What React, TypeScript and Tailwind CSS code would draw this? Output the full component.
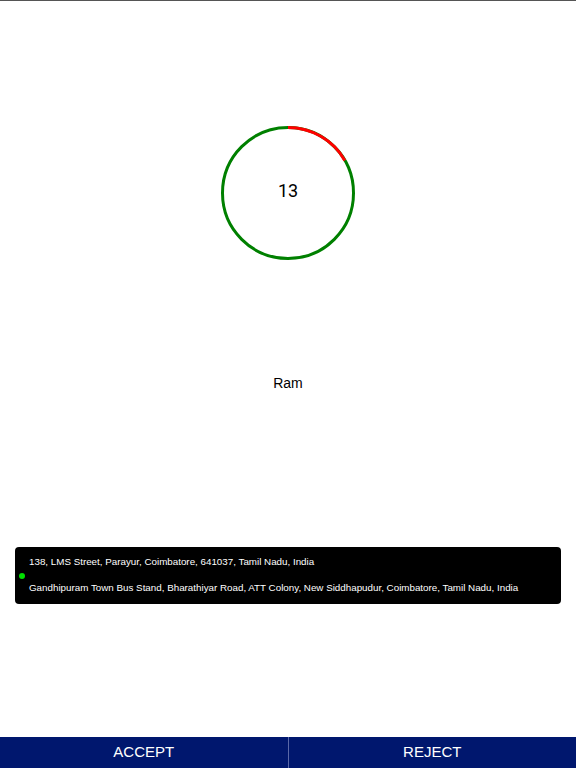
const RADIUS = 65.5;
const CIRC = 2 * Math.PI * RADIUS;

function Countdown({ value, elapsed }: { value: number; elapsed: number }) {
  const red = CIRC * elapsed;
  return (
    <div className="relative w-[136px] h-[136px]">
      <svg width="136" height="136" viewBox="0 0 136 136" className="-rotate-90">
        <circle cx="68" cy="68" r={RADIUS} fill="none" stroke="#008000" strokeWidth="3" />
        <circle
          cx="68"
          cy="68"
          r={RADIUS}
          fill="none"
          stroke="#ff0000"
          strokeWidth="3"
          strokeDasharray={`${red} ${CIRC}`}
        />
      </svg>
      <div className="absolute inset-0 pb-[5px] flex items-center justify-center text-[18px] text-black font-['Roboto',sans-serif]">
        {value}
      </div>
    </div>
  );
}

export default function App() {
  return (
    <div className="h-[768px] flex flex-col items-center bg-white border-t border-[#555] font-['Liberation_Sans',Arial,sans-serif]">
      <div className="mt-[124px]">
        <Countdown value={13} elapsed={1 / 6} />
      </div>
      <p className="mt-[112px] h-[20px] leading-[20px] text-[14px] text-black">Ram</p>
      <div className="mt-[154px] w-[546px] self-start ml-[15px] rounded-[4px] bg-black pt-[8px] pb-[9px] text-white text-[9.8px]">
        <p className="pl-[14px] h-[14px] leading-[14px]">
          138, LMS Street, Parayur, Coimbatore, 641037, Tamil Nadu, India
        </p>
        <div className="mt-[4px] ml-[4px] w-[6px] h-[6px] rounded-full bg-[#00e000]" />
        <p className="mt-[2px] pl-[14px] h-[14px] leading-[14px]">
          Gandhipuram Town Bus Stand, Bharathiyar Road, ATT Colony, New Siddhapudur, Coimbatore, Tamil Nadu, India
        </p>
      </div>
      <div className="mt-auto w-full h-[31px] flex bg-[#00176e] text-white text-[15px]">
        <button type="button" className="flex-1 flex items-center justify-center pb-px">
          ACCEPT
        </button>
        <div className="w-px bg-[#5a68a8]" />
        <button type="button" className="flex-1 flex items-center justify-center pb-px">
          REJECT
        </button>
      </div>
    </div>
  );
}
